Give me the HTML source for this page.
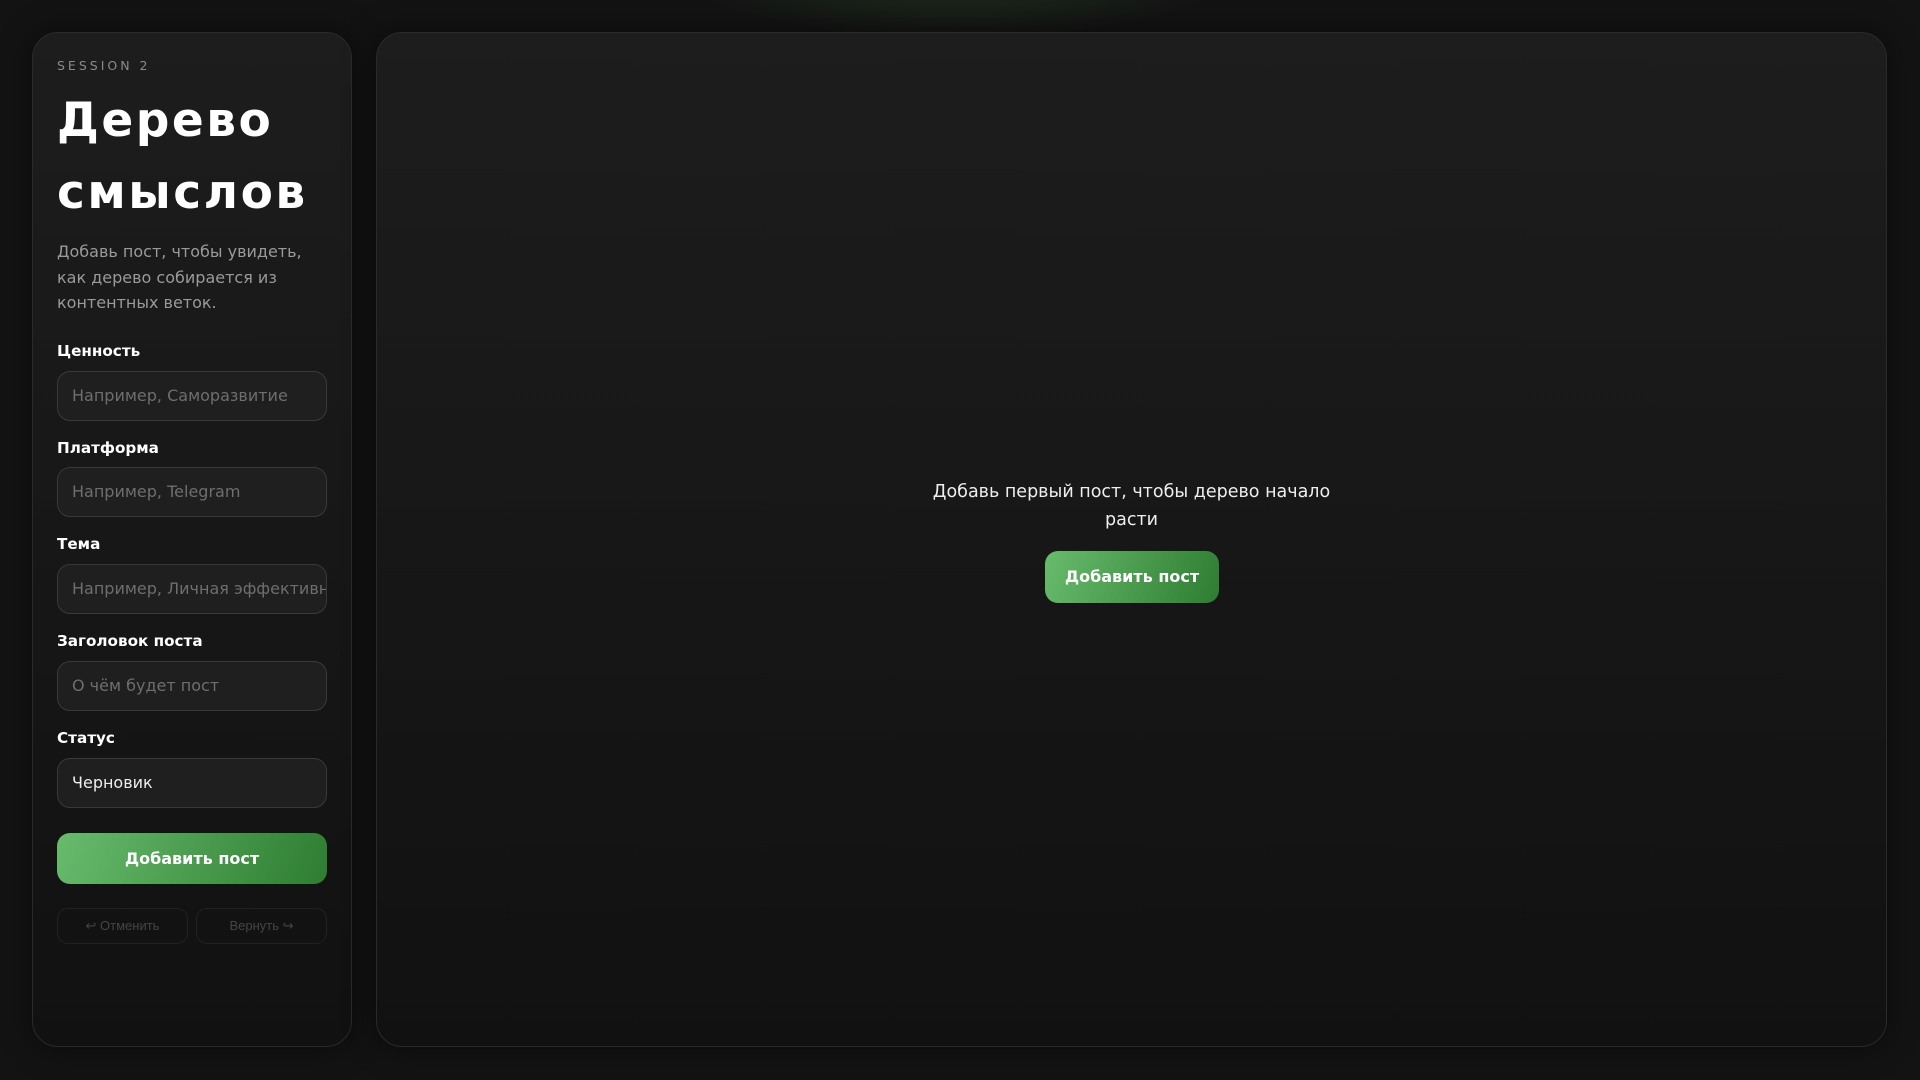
<!DOCTYPE html>
<html><head><meta charset="utf-8"><style>
*{box-sizing:border-box;margin:0;padding:0}
body{width:1920px;height:1080px;overflow:hidden;background:#131313;font-family:"DejaVu Sans","Liberation Sans",sans-serif;color:#fff;position:relative}
.glow{position:absolute;left:655px;top:-120px;width:600px;height:160px;background:radial-gradient(ellipse at center,rgba(70,140,70,0.28),rgba(0,0,0,0) 70%)}
.panel{position:absolute;top:32px;height:1015px;border:1px solid #2a2a2a;border-radius:26px;background:linear-gradient(180deg,#1d1d1d,#111 100%);box-shadow:0 0 30px rgba(0,0,0,.5)}
.left{left:32px;width:320px;padding:0 24px}
.right{left:376px;width:1511px}
.sess{position:absolute;top:25px;left:24px;font-size:12.5px;letter-spacing:3px;color:#8a8a8a}
h1{position:absolute;top:52px;left:24px;font-size:47px;line-height:72px;font-weight:bold;letter-spacing:2.5px}
.desc{position:absolute;top:206px;left:24px;width:275px;font-size:16px;line-height:25.6px;color:#9a9a9a}
.lbl{position:absolute;left:24px;font-size:15.2px;font-weight:bold}
.inp{position:absolute;left:24px;width:270px;height:50px;border:1px solid #393939;border-radius:13px;background:#1f1f1f;font-size:16px;color:#6e6e6e;padding:0 14px;line-height:48px;white-space:nowrap;overflow:hidden}
.btn{position:absolute;border-radius:13px;background:linear-gradient(110deg,#68bb6c,#2e7d32);font-weight:bold;color:#fff;text-align:center}
.sm{position:absolute;top:875px;width:131px;height:36px;border:1px solid #222;border-radius:11px;font-family:"Liberation Sans",sans-serif;font-size:13px;color:#444;text-align:center;line-height:34px}
.msg{position:absolute;left:0;width:100%;top:445px;text-align:center;font-size:17.5px;line-height:28px;color:#eee}
</style></head><body>
<div class="glow"></div>
<div class="panel left">
<div class="sess">SESSION 2</div>
<h1>Дерево<br>смыслов</h1>
<div class="desc">Добавь пост, чтобы увидеть, как дерево собирается из контентных веток.</div>
<div class="lbl" style="top:309px">Ценность</div>
<div class="inp" style="top:338px">Например, Саморазвитие</div>
<div class="lbl" style="top:406px">Платформа</div>
<div class="inp" style="top:434px">Например, Telegram</div>
<div class="lbl" style="top:502px">Тема</div>
<div class="inp" style="top:531px">Например, Личная эффективность</div>
<div class="lbl" style="top:599px">Заголовок поста</div>
<div class="inp" style="top:628px">О чём будет пост</div>
<div class="lbl" style="top:696px">Статус</div>
<div class="inp" style="top:725px;color:#eee">Черновик</div>
<div class="btn" style="left:24px;top:800px;width:270px;height:51px;line-height:51px;font-size:16px">Добавить пост</div>
<div class="sm" style="left:24px">↩ Отменить</div>
<div class="sm" style="left:163px">Вернуть ↪</div>
</div>
<div class="panel right">
<div class="msg">Добавь первый пост, чтобы дерево начало<br>расти</div>
<div class="btn" style="left:668px;top:518px;width:174px;height:52px;line-height:52px;font-size:16px">Добавить пост</div>
</div>
</body></html>
